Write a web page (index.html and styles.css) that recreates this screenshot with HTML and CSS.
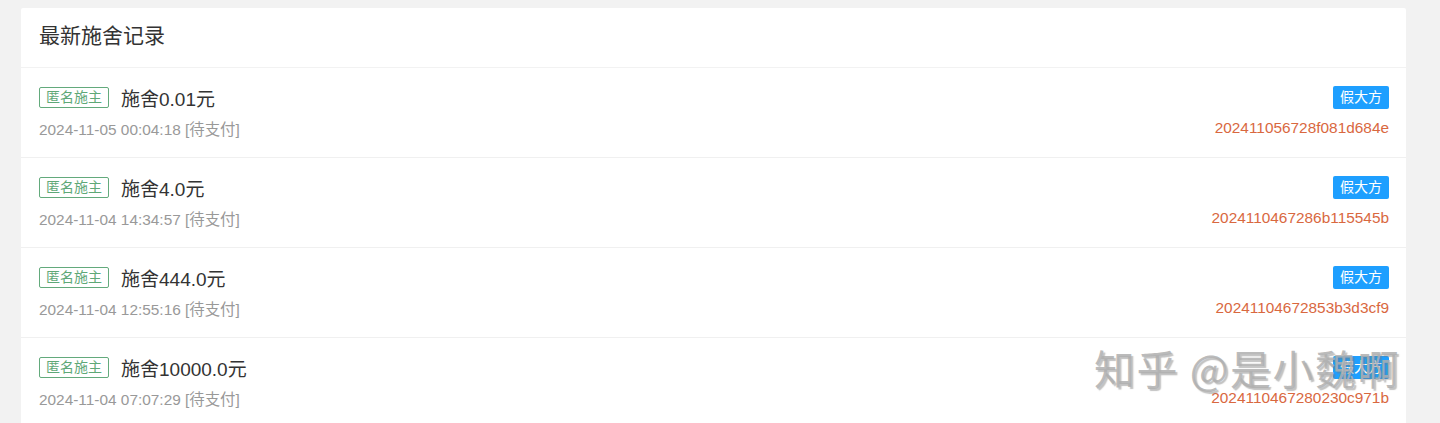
FILE: index.html
```html
<!DOCTYPE html>
<html lang="zh-CN">
<head>
<meta charset="utf-8">
<title>最新施舍记录</title>
<link rel="stylesheet" href="styles.css">
</head>
<body>
<div class="page">
  <div class="card">
    <div class="card-header">最新施舍记录</div>
    <ul class="list">
      <li class="row">
        <div class="line">
          <div class="left"><span class="tag">匿名施主</span><span class="amount">施舍0.01元</span></div>
          <span class="badge">假大方</span>
        </div>
        <div class="line sub">
          <span class="date">2024-11-05 00:04:18 [待支付]</span>
          <span class="order">202411056728f081d684e</span>
        </div>
      </li>
      <li class="row">
        <div class="line">
          <div class="left"><span class="tag">匿名施主</span><span class="amount">施舍4.0元</span></div>
          <span class="badge">假大方</span>
        </div>
        <div class="line sub">
          <span class="date">2024-11-04 14:34:57 [待支付]</span>
          <span class="order">2024110467286b115545b</span>
        </div>
      </li>
      <li class="row">
        <div class="line">
          <div class="left"><span class="tag">匿名施主</span><span class="amount">施舍444.0元</span></div>
          <span class="badge">假大方</span>
        </div>
        <div class="line sub">
          <span class="date">2024-11-04 12:55:16 [待支付]</span>
          <span class="order">20241104672853b3d3cf9</span>
        </div>
      </li>
      <li class="row">
        <div class="line">
          <div class="left"><span class="tag">匿名施主</span><span class="amount">施舍10000.0元</span></div>
          <span class="badge">假大方</span>
        </div>
        <div class="line sub">
          <span class="date">2024-11-04 07:07:29 [待支付]</span>
          <span class="order">2024110467280230c971b</span>
        </div>
      </li>
    </ul>
  </div>
  <div class="watermark">知乎 @是小魏啊</div>
</div>
</body>
</html>
```
FILE: styles.css
```css
html, body {
  margin: 0;
  padding: 0;
  background: #f2f2f2;
  font-family: "Liberation Sans", "Noto Sans CJK SC", Arial, sans-serif;
  color: #333;
}
.page {
  position: relative;
  padding: 8px 34px 0 21px;
  height: 415px;
  overflow: hidden;
}
.card {
  background: #fff;
  border-radius: 2px;
}
.card-header {
  height: 59px;
  line-height: 56px;
  padding: 0 18px;
  font-size: 21px;
  color: #333;
  border-bottom: 1px solid #f2f2f2;
}
.list {
  list-style: none;
  margin: 0;
  padding: 0;
}
.row {
  box-sizing: border-box;
  height: 90px;
  padding: 16px 17px 0 18px;
  border-bottom: 1px solid #f0f0f0;
  display: flex;
  flex-direction: column;
  gap: 9px;
}
.line {
  display: flex;
  justify-content: space-between;
  align-items: center;
  height: 26px;
}
.line.sub {
  height: 18px;
}
.left {
  display: flex;
  align-items: center;
  gap: 12px;
}
.tag {
  display: inline-block;
  box-sizing: border-box;
  height: 21px;
  line-height: 19px;
  padding: 0 6px;
  border: 1px solid #63aa7c;
  border-radius: 2px;
  color: #5ea877;
  font-size: 14px;
}
.amount {
  font-size: 19px;
  color: #333;
}
.badge {
  display: inline-block;
  height: 23px;
  line-height: 23px;
  padding: 0 7px;
  border-radius: 2px;
  background: #1e9fff;
  color: #fff;
  font-size: 14px;
}
.date {
  font-size: 15.4px;
  color: #999;
}
.order {
  font-size: 15.4px;
  color: #d9683f;
}
.watermark {
  position: absolute;
  left: 1094px;
  top: 337px;
  font-size: 41px;
  color: rgba(175,175,175,0.85);
  text-shadow: 2px 2px 1px rgba(120,120,120,0.45);
  font-family: "Noto Sans CJK SC", sans-serif;
  white-space: nowrap;
  letter-spacing: 1.5px;
}
```
